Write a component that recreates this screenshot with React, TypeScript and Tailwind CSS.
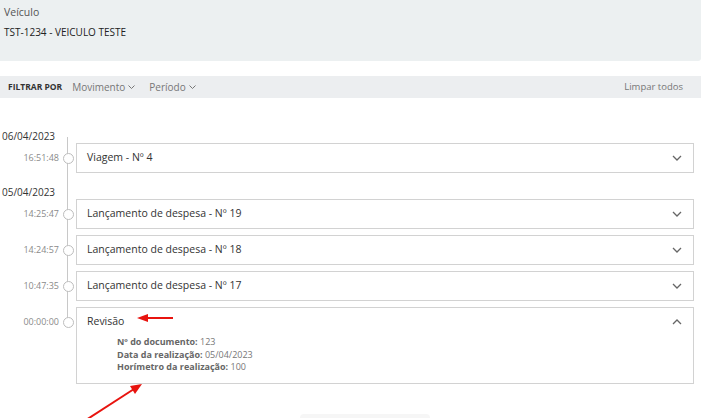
import React from "react";

type Item = { time: string; title: string; open?: boolean };
type Day = { date: string; items: Item[] };

const days: Day[] = [
  { date: "06/04/2023", items: [{ time: "16:51:48", title: "Viagem - Nº 4" }] },
  {
    date: "05/04/2023",
    items: [
      { time: "14:25:47", title: "Lançamento de despesa - Nº 19" },
      { time: "14:24:57", title: "Lançamento de despesa - Nº 18" },
      { time: "10:47:35", title: "Lançamento de despesa - Nº 17" },
      { time: "00:00:00", title: "Revisão", open: true },
    ],
  },
];

function Chevron({ up = false }: { up?: boolean }) {
  return (
    <svg width="10" height="6" viewBox="0 0 10 6">
      <path
        d={up ? "M1 5 L5 1 L9 5" : "M1 1 L5 5 L9 1"}
        fill="none"
        stroke="#666"
        strokeWidth="1.3"
      />
    </svg>
  );
}

function Small() {
  return (
    <svg width="7" height="4" viewBox="0 0 7 4">
      <path d="M0.5 0.5 L3.5 3.5 L6.5 0.5" fill="none" stroke="#777" strokeWidth="1" />
    </svg>
  );
}

function Row({ item }: { item: Item }) {
  return (
    <div className="flex items-start">
      <div className="w-[60px] h-[30px] flex items-center justify-end pr-[1px] text-[9px] text-[#8a8a8a]">
        {item.time}
      </div>
      <div className="relative z-10 w-[16px] h-[30px] flex items-center justify-center">
        <div className="w-[11px] h-[11px] rounded-full border border-[#bdbdbd] bg-white" />
      </div>
      <div className="w-[618px] border border-[#d2d2d2] bg-white">
        <div className="h-[28px] flex items-center justify-between pl-[10px] pr-[11px]">
          <span className="text-[10.5px] text-[#333]">{item.title}</span>
          <Chevron up={item.open} />
        </div>
        {item.open && (
          <div className="pl-[40px] pb-[9px] text-[9px] leading-[12.5px] text-[#777]">
            <p><b className="text-[#666]">Nº do documento:</b> 123</p>
            <p><b className="text-[#666]">Data da realização:</b> 05/04/2023</p>
            <p><b className="text-[#666]">Horímetro da realização:</b> 100</p>
          </div>
        )}
      </div>
    </div>
  );
}

export default function App() {
  return (
    <div
      className="relative w-[706px] h-[418px] overflow-hidden bg-white"
      style={{ fontFamily: '"Open Sans", "Noto Sans", sans-serif' }}
    >
      <div className="w-[701px] h-[61px] bg-[#ecf0f1] rounded-br-[3px] pl-[4px] pt-[4px]">
        <p className="text-[10.5px] leading-[16px] text-[#555]">Veículo</p>
        <p className="mt-[4px] text-[10px] leading-[16px] text-[#222]">TST-1234 - VEICULO TESTE</p>
      </div>

      <div className="mt-[15px] w-[701px] h-[22px] bg-[#eceef0] flex items-center pl-[8px] pr-[18px]">
        <span className="text-[8.5px] font-bold text-[#333]">FILTRAR POR</span>
        <span className="ml-[10px] text-[10px] text-[#777] flex items-center gap-[3px]">
          Movimento <Small />
        </span>
        <span className="ml-[14px] text-[10px] text-[#777] flex items-center gap-[3px]">
          Período <Small />
        </span>
        <span className="ml-auto text-[9.5px] text-[#777]">Limpar todos</span>
      </div>

      <div className="relative mt-[32px]">
        <div className="absolute left-[67px] top-[7px] h-[186px] w-px bg-[#c8c8c8]" />
        {days.map((d, i) => (
          <div key={d.date} className={i > 0 ? "mt-[13px]" : ""}>
            <p className="pl-[2px] h-[13px] text-[10px] leading-[13px] text-[#333]">{d.date}</p>
            <div className="flex flex-col gap-[6px]">
              {d.items.map((it) => (
                <Row key={it.time} item={it} />
              ))}
            </div>
          </div>
        ))}
      </div>

      <div className="ml-[300px] mt-[30px] w-[130px] h-[20px] rounded-[4px] bg-[#f6f6f6]" />

      <svg
        className="absolute left-0 top-0 z-20 pointer-events-none"
        width="706"
        height="418"
        viewBox="0 0 706 418"
      >
        <line x1="173" y1="318" x2="146" y2="318" stroke="#e8140f" strokeWidth="2" />
        <polygon points="137,318 148,314 148,322" fill="#e8140f" />
        <line x1="86" y1="420" x2="134" y2="389" stroke="#e8140f" strokeWidth="2" />
        <polygon points="142,384 130,386 135,394" fill="#e8140f" />
      </svg>
    </div>
  );
}
